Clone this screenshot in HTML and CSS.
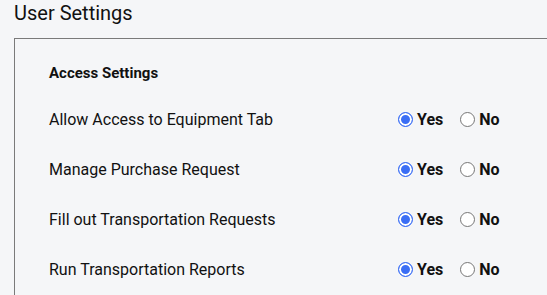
FILE: index.html
```html
<!DOCTYPE html>
<html lang="en">
<head>
  <meta charset="UTF-8">
  <title>User Settings</title>
  <link rel="stylesheet" href="styles.css">
</head>
<body>
  <h1>User Settings</h1>
  <div class="panel">
    <h2>Access Settings</h2>
    <div class="row">
      <span class="label">Allow Access to Equipment Tab</span>
      <div class="options">
        <label><input type="radio" name="equip" checked> Yes</label>
        <label><input type="radio" name="equip"> No</label>
      </div>
    </div>
    <div class="row">
      <span class="label">Manage Purchase Request</span>
      <div class="options">
        <label><input type="radio" name="purchase" checked> Yes</label>
        <label><input type="radio" name="purchase"> No</label>
      </div>
    </div>
    <div class="row">
      <span class="label">Fill out Transportation Requests</span>
      <div class="options">
        <label><input type="radio" name="transreq" checked> Yes</label>
        <label><input type="radio" name="transreq"> No</label>
      </div>
    </div>
    <div class="row">
      <span class="label">Run Transportation Reports</span>
      <div class="options">
        <label><input type="radio" name="transrep" checked> Yes</label>
        <label><input type="radio" name="transrep"> No</label>
      </div>
    </div>
  </div>
</body>
</html>
```

FILE: styles.css
```css
html, body {
  background-color: #f5f6f8;
}
body {
  font-family: Roboto, Arial, sans-serif;
  color: #111;
  margin: 0;
  padding: 0 0 0 14px;
  overflow: hidden;
}
h1 {
  font-size: 20px;
  font-weight: 400;
  margin: 0;
  padding-top: 1px;
  line-height: 24px;
}
.panel {
  margin-top: 13px;
  width: 600px;
  border: 1px solid #7a7a7a;
  padding: 24px 0 40px 34px;
}
h2 {
  font-size: 15px;
  font-weight: 700;
  margin: 0 0 11px 0;
  line-height: 20px;
}
.row {
  display: grid;
  grid-template-columns: 349px auto;
  align-items: center;
  height: 50px;
  font-size: 16px;
}
.options {
  display: flex;
  gap: 17px;
}
.options label {
  display: flex;
  align-items: center;
  font-weight: 700;
}
input[type="radio"] {
  appearance: none;
  width: 15px;
  height: 15px;
  margin: 0 4px 0 0;
  border: 1px solid #767676;
  border-radius: 50%;
  background-color: #fff;
}
input[type="radio"]:checked {
  border-color: #3b6ef5;
  background-color: #3b6ef5;
  box-shadow: inset 0 0 0 2px #fff;
}
```
